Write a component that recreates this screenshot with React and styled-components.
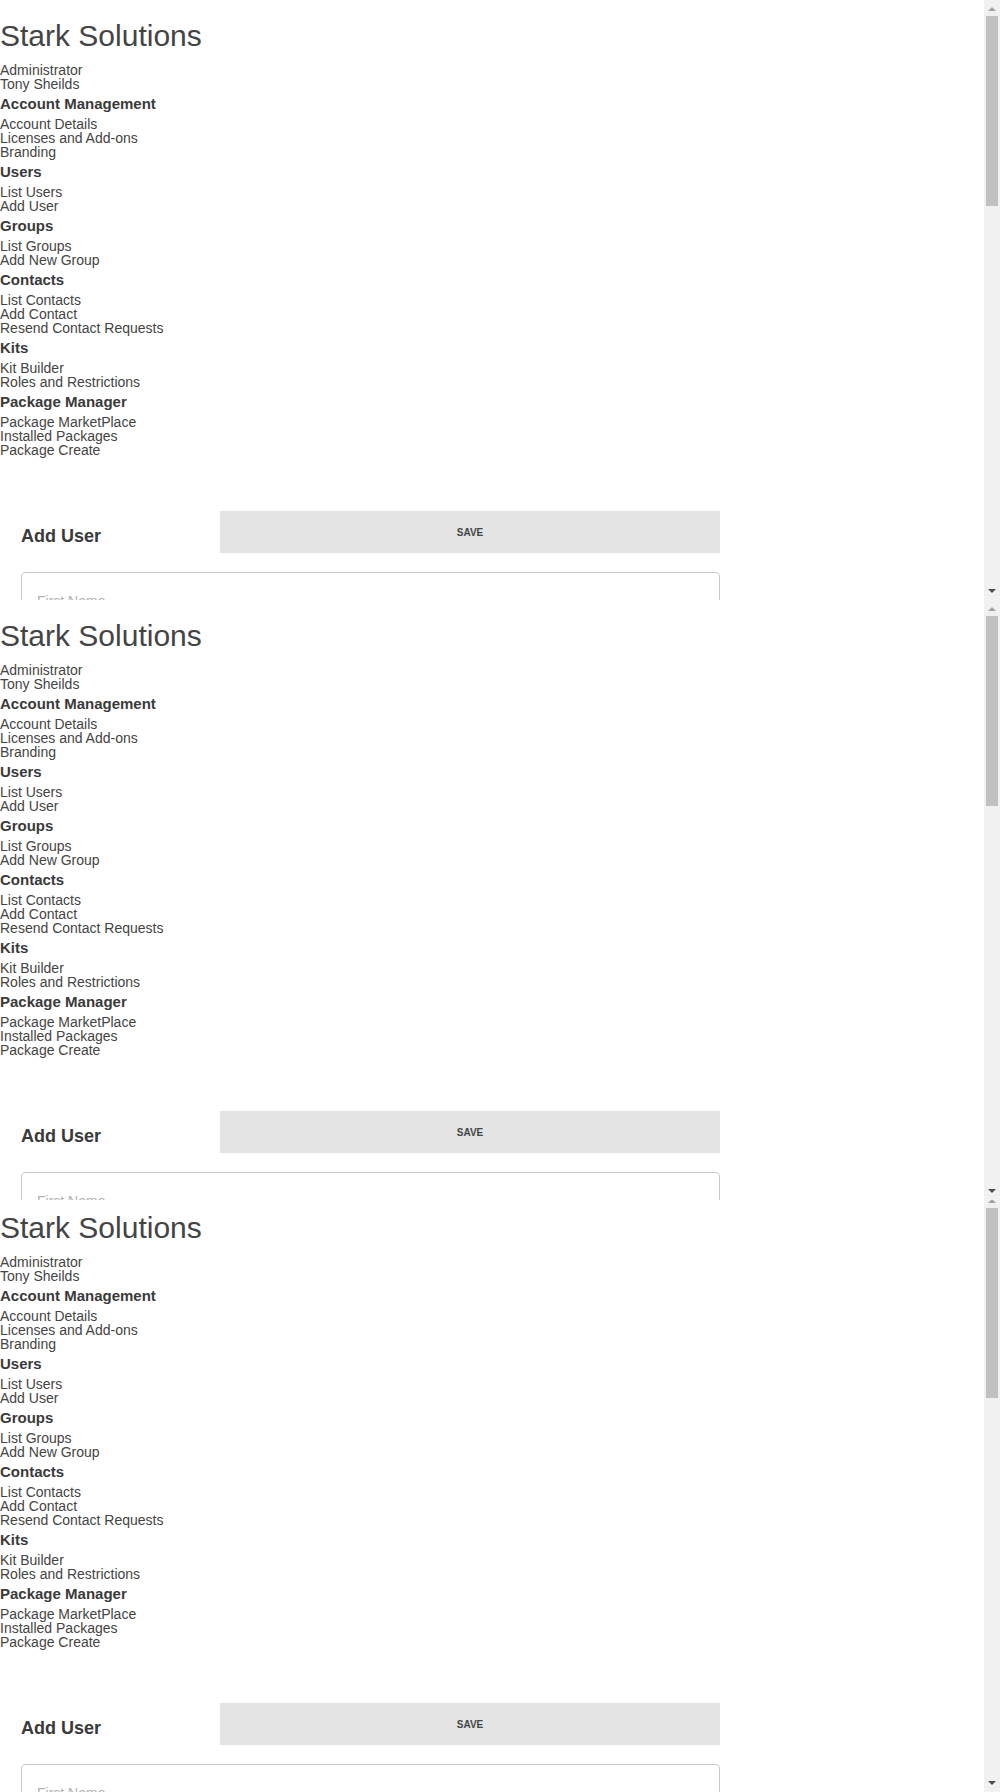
import React from 'react';
import styled, { createGlobalStyle } from 'styled-components';

const GlobalStyle = createGlobalStyle`
  html, body { margin: 0; padding: 0; background: #fff; }
  body {
    overflow: hidden;
    font-family: "Liberation Sans", Arial, sans-serif;
    color: #444;
  }
  * { box-sizing: border-box; }
`;

const Stack = styled.div`
  display: flex;
  flex-direction: column;
  width: 1000px;
`;

const Clip = styled.div`
  flex: none;
  height: ${(p) => p.$height}px;
  overflow: hidden;
`;

const Frame = styled.div`
  display: flex;
  height: 600px;
  width: 1000px;
  margin-top: ${(p) => -(p.$cropTop || 0)}px;
  background: #fff;
`;

const Viewport = styled.div`
  flex: 1;
  min-width: 0;
  height: 100%;
  overflow: hidden;
`;

const ScrollRail = styled.div`
  flex: none;
  width: 16px;
  height: 100%;
  display: flex;
  flex-direction: column;
  background: #f1f1f1;
`;

const ArrowButton = styled.div`
  flex: none;
  width: 16px;
  height: 16px;
  display: block;
  svg { display: block; }
`;

const Track = styled.div`
  flex: 1;
  padding: 0 2px;
`;

const Thumb = styled.div`
  width: 12px;
  background: #c1c1c1;
`;

const Page = styled.div`
  min-height: 1794px;
`;

const Brand = styled.h1`
  margin: 21px 0 12px;
  font-size: 30px;
  line-height: 30px;
  font-weight: 400;
  color: #444;
`;

const ProfileLine = styled.div`
  font-size: 14px;
  line-height: 14px;
  color: #444;
`;

const NavHeading = styled.h3`
  margin: 5px 0;
  font-size: 15px;
  line-height: 16px;
  font-weight: 700;
  color: #3a3a3a;
`;

const NavLink = styled.a`
  display: block;
  font-size: 14px;
  line-height: 14px;
  color: #444;
  text-decoration: none;
`;

const FormSection = styled.section`
  margin: 54px 0 0 21px;
  width: 699px;
  display: flex;
  flex-direction: column;
  gap: 19px;
`;

const FormHeader = styled.div`
  display: flex;
  align-items: flex-start;
`;

const FormTitle = styled.h2`
  width: 199px;
  margin: 16px 0 0;
  font-size: 18px;
  line-height: 18px;
  font-weight: 700;
  color: #3a3a3a;
`;

const SaveButton = styled.button`
  flex: 1;
  height: 42px;
  border: none;
  border-radius: 0;
  background: #e4e4e4;
  color: #444;
  font-family: "Liberation Sans", Arial, sans-serif;
  font-size: 10px;
  font-weight: 700;
  text-transform: uppercase;
  cursor: pointer;
`;

const TextField = styled.input`
  display: block;
  width: 100%;
  margin: 0;
  padding: 20px 15px;
  border: 1px solid #cacaca;
  border-radius: 4px;
  font-family: "Liberation Sans", Arial, sans-serif;
  font-size: 14px;
  line-height: 16px;
  color: #444;
  background: #fff;
  outline: none;

  &::placeholder {
    color: #b3b3b3;
  }
`;

const nav = [
  { title: 'Account Management', links: ['Account Details', 'Licenses and Add-ons', 'Branding'] },
  { title: 'Users', links: ['List Users', 'Add User'] },
  { title: 'Groups', links: ['List Groups', 'Add New Group'] },
  { title: 'Contacts', links: ['List Contacts', 'Add Contact', 'Resend Contact Requests'] },
  { title: 'Kits', links: ['Kit Builder', 'Roles and Restrictions'] },
  { title: 'Package Manager', links: ['Package MarketPlace', 'Installed Packages', 'Package Create'] },
];

const fields = [
  'First Name',
  'Last Name',
  'Email Address',
  'Username',
  'Password',
  'Confirm Password',
  'Phone Number',
  'Job Title',
  'Department',
  'Group',
];

const VIEW_HEIGHT = 600;
const CONTENT_HEIGHT = 1794;
const TRACK_HEIGHT = VIEW_HEIGHT - 32;

function AdminPage() {
  return (
    <Page>
      <Brand>Stark Solutions</Brand>
      <ProfileLine>Administrator</ProfileLine>
      <ProfileLine>Tony Sheilds</ProfileLine>
      <nav>
        {nav.map((section) => (
          <div key={section.title}>
            <NavHeading>{section.title}</NavHeading>
            {section.links.map((l) => (
              <NavLink key={l} href="#">
                {l}
              </NavLink>
            ))}
          </div>
        ))}
      </nav>
      <FormSection>
        <FormHeader>
          <FormTitle>Add User</FormTitle>
          <SaveButton type="button">Save</SaveButton>
        </FormHeader>
        {fields.map((f) => (
          <TextField key={f} placeholder={f} />
        ))}
      </FormSection>
    </Page>
  );
}

function ScrollBar() {
  const thumb = Math.round((TRACK_HEIGHT * VIEW_HEIGHT) / CONTENT_HEIGHT);
  return (
    <ScrollRail>
      <ArrowButton>
        <svg width="16" height="16" viewBox="0 0 16 16">
          <polygon points="4,11 8,7 12,11" fill="#a3a3a3" />
        </svg>
      </ArrowButton>
      <Track>
        <Thumb style={{ height: thumb }} />
      </Track>
      <ArrowButton>
        <svg width="16" height="16" viewBox="0 0 16 16">
          <polygon points="4,5 12,5 8,9" fill="#505050" />
        </svg>
      </ArrowButton>
    </ScrollRail>
  );
}

function BrowserFrame({ cropTop }) {
  return (
    <Frame $cropTop={cropTop}>
      <Viewport>
        <AdminPage />
      </Viewport>
      <ScrollBar />
    </Frame>
  );
}

export default function App() {
  return (
    <>
      <GlobalStyle />
      <Stack>
        <Clip $height={600}>
          <BrowserFrame />
        </Clip>
        <Clip $height={600}>
          <BrowserFrame />
        </Clip>
        <Clip $height={592}>
          <BrowserFrame cropTop={8} />
        </Clip>
      </Stack>
    </>
  );
}
